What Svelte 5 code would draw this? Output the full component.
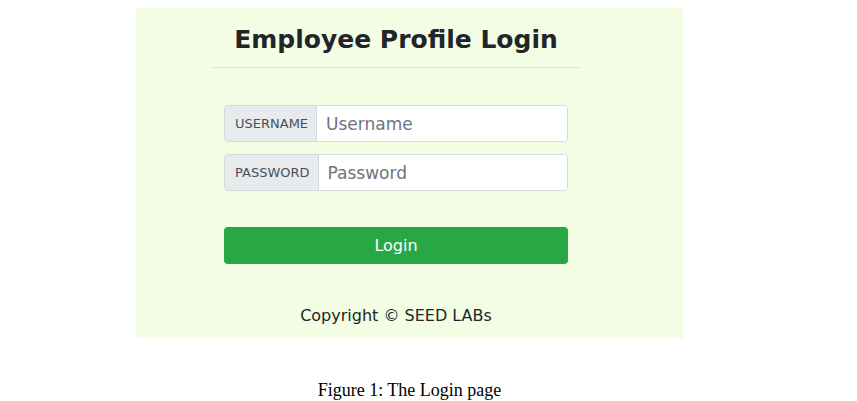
<script>
  let username = $state('');
  let password = $state('');
</script>

<figure>
  <div class="panel">
    <main>
      <h1>Employee Profile Login</h1>
      <form onsubmit={(e) => e.preventDefault()}>
        <div class="group">
          <label for="username">USERNAME</label>
          <input id="username" type="text" placeholder="Username" bind:value={username} />
        </div>
        <div class="group">
          <label for="password">PASSWORD</label>
          <input id="password" type="password" placeholder="Password" bind:value={password} />
        </div>
        <button type="submit">Login</button>
      </form>
      <p>Copyright © SEED LABs</p>
    </main>
  </div>
  <figcaption>Figure 1: The Login page</figcaption>
</figure>

<style>
  :global(body) {
    background: #fff;
  }
  figure {
    margin: 0;
    padding: 8px 174px 0 136px;
  }
  .panel {
    padding: 0 103px 0 76px;
    background: #f2fde4;
    color: #212529;
    font-family: 'DejaVu Sans', sans-serif;
  }
  h1 {
    margin: 0;
    padding: 15px 0 11px;
    border-bottom: 1px solid #dce6cf;
    font-size: 25px;
    line-height: 33px;
    text-align: center;
    white-space: nowrap;
  }
  form {
    display: flex;
    flex-direction: column;
    gap: 12px;
    padding: 37px 12px 0;
  }
  .group {
    display: flex;
    height: 37px;
    box-sizing: border-box;
    border: 1px solid #d3d9d8;
    border-radius: 4px;
    background: #fff;
    overflow: hidden;
  }
  label {
    display: flex;
    align-items: center;
    padding: 0 8px 0 10px;
    border-right: 1px solid #d3d9dd;
    background: #e7ebee;
    color: #495057;
    font-size: 13px;
  }
  input {
    flex: 1;
    min-width: 0;
    padding: 0 9px;
    border: 0;
    background: #fff;
    color: #495057;
    font-family: inherit;
    font-size: 17px;
  }
  input::placeholder {
    color: #6c757d;
    opacity: 1;
  }
  button {
    height: 37px;
    margin-top: 24px;
    border: 0;
    border-radius: 4px;
    background: #28a745;
    color: #fff;
    font-family: inherit;
    font-size: 16px;
  }
  p {
    margin: 0;
    padding: 40px 0 10px;
    font-size: 16px;
    line-height: 24px;
    text-align: center;
  }
  figcaption {
    padding-top: 42px;
    color: #000;
    font-family: 'Liberation Serif', serif;
    font-size: 18px;
    line-height: 21px;
    text-align: center;
  }
</style>
